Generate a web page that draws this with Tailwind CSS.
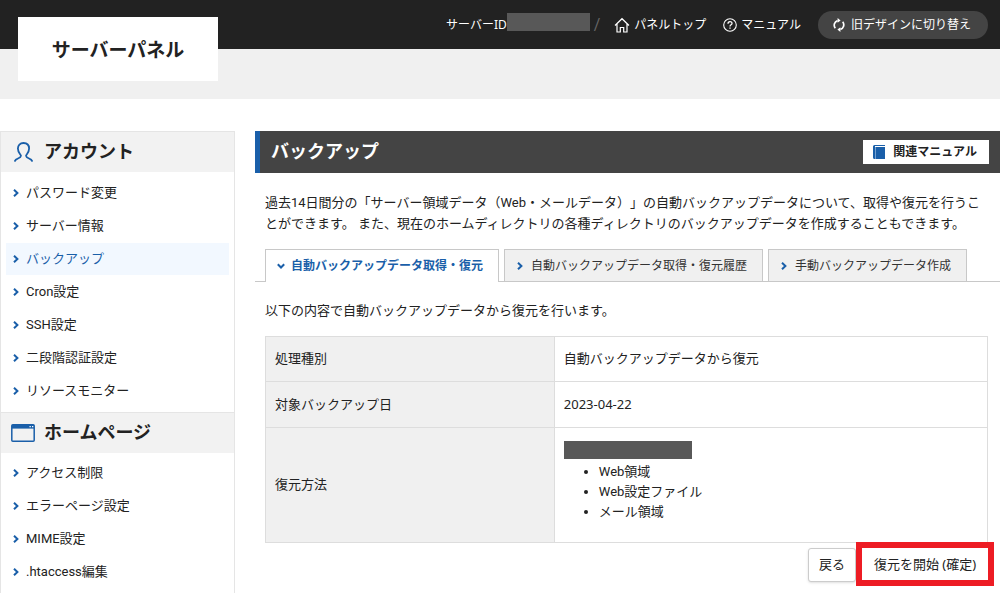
<!DOCTYPE html>
<html lang="ja">
<head>
<meta charset="utf-8">
<title>サーバーパネル</title>
<script src="https://cdn.jsdelivr.net/npm/@tailwindcss/browser@4"></script>
</head>
<body class="bg-white font-['Roboto','Noto_Sans_CJK_JP',sans-serif] text-[13px] text-[#222] [text-spacing-trim:space-all]">
<svg class="hidden" aria-hidden="true">
  <symbol id="chev" viewBox="0 0 6 8"><path d="M1 .8 4.4 4 1 7.2" fill="none" stroke="#1a5fa9" stroke-width="2"/></symbol>
</svg>

<header class="relative">
  <div class="flex h-[49px] items-center justify-end bg-[#222] pr-3 text-xs text-white">
    <span class="font-['Noto_Sans','Noto_Sans_CJK_JP',sans-serif]">サーバーID</span>
    <span class="mb-1.5 h-[18px] w-[83px] bg-[#585858]"></span>
    <span class="mr-3.5 ml-1 text-base text-[#666]">/</span>
    <a href="#" class="mr-[17px] flex items-center gap-1">
      <svg class="h-4 w-4" viewBox="0 0 16 16" fill="none" stroke="#fff" stroke-width="1.2"><path d="M1 8.5 8 1.7l7 6.8M3 7v8h3.3v-4.5h3.4V15H13V7"/></svg>
      パネルトップ</a>
    <a href="#" class="mr-[17px] flex items-center gap-1">
      <svg class="h-3.5 w-3.5" viewBox="0 0 14 14" fill="none" stroke="#fff" stroke-width="1.1"><circle cx="7" cy="7" r="6.3"/><path d="M5 5.7C5 3 9 3 9 5.4 9 6.8 7 6.8 7 8.4M7 9.6v1.2" stroke-width="1.3"/></svg>
      マニュアル</a>
    <button type="button" class="flex h-7 items-center gap-1.5 rounded-full bg-[#444] pr-[17px] pl-[15px]">
      <svg class="h-3.5 w-3" viewBox="0 0 12 14" fill="none" stroke="#fff" stroke-width="1.7"><path d="M2.3 10.2A4.8 4.8 0 0 1 4.600 2.600M9.7 3.8A4.8 4.8 0 0 1 7.400 11.400"/><path d="M4.600 0v4.8L7.600 2.4ZM7.400 9.2V14L4.400 11.6Z" fill="#fff" stroke="none"/></svg>
      旧デザインに切り替え</button>
  </div>
  <div class="h-[50px] bg-[#f0f0f0]"></div>
  <a href="#" class="absolute top-[17px] left-[18px] flex h-16 w-[200px] items-center justify-center bg-white pt-1 text-[19px] font-bold">サーバーパネル</a>
</header>

<div class="mt-8 flex items-start gap-5">
  <nav class="w-[235px] shrink-0 border-x border-[#e5e5e5]">
    <h2 class="flex h-[41px] items-center border-t border-[#e5e5e5] bg-[#f2f2f2] pl-2.5 text-lg font-bold">
      <span class="flex w-[33px] pl-[3px]"><svg class="h-5 w-[19px]" viewBox="0 0 19 20" fill="none" stroke="#1a5fa9" stroke-width="1.8"><path d="M.7 19.600C.9 16.300 6.800 16.800 7 13.800 7 12.500 3.900 11 3.900 6.600 3.900 3.200 6 1 9.500 1s5.600 2.200 5.600 5.600c0 4.400-3.100 5.900-3.100 7.200.2 3 6.100 2.500 6.300 5.800"/></svg></span>
      アカウント</h2>
    <ul class="flex flex-col gap-px p-[5px]">
      <li><a href="#" class="flex h-8 items-center gap-[7px] pl-[7px]"><svg class="h-2 w-1.5"><use href="#chev"/></svg>パスワード変更</a></li>
      <li><a href="#" class="flex h-8 items-center gap-[7px] pl-[7px]"><svg class="h-2 w-1.5"><use href="#chev"/></svg>サーバー情報</a></li>
      <li><a href="#" aria-current="page" class="flex h-8 items-center gap-[7px] bg-[#f2f8ff] pl-[7px] text-[#1a5fa9]"><svg class="h-2 w-1.5"><use href="#chev"/></svg>バックアップ</a></li>
      <li><a href="#" class="flex h-8 items-center gap-[7px] pl-[7px]"><svg class="h-2 w-1.5"><use href="#chev"/></svg>Cron設定</a></li>
      <li><a href="#" class="flex h-8 items-center gap-[7px] pl-[7px]"><svg class="h-2 w-1.5"><use href="#chev"/></svg>SSH設定</a></li>
      <li><a href="#" class="flex h-8 items-center gap-[7px] pl-[7px]"><svg class="h-2 w-1.5"><use href="#chev"/></svg>二段階認証設定</a></li>
      <li><a href="#" class="flex h-8 items-center gap-[7px] pl-[7px]"><svg class="h-2 w-1.5"><use href="#chev"/></svg>リソースモニター</a></li>
    </ul>
    <h2 class="flex h-[41px] items-center border-t border-[#e5e5e5] bg-[#f2f2f2] pl-2.5 text-lg font-bold">
      <span class="flex w-[33px]"><svg class="h-[18px] w-6" viewBox="0 0 24 18"><rect x=".8" y=".8" width="22.400" height="16.400" rx="1" fill="#f2f2f2" stroke="#1a5fa9" stroke-width="1.500"/><path d="M1 1h22v3.600H1Z" fill="#1a5fa9"/><path d="M18.500 2.700h1.300M21 2.700h1.300" stroke="#fff" stroke-width="1.200"/></svg></span>
      ホームページ</h2>
    <ul class="flex flex-col gap-px px-[5px] pt-1 pb-[5px]">
      <li><a href="#" class="flex h-8 items-center gap-[7px] pl-[7px]"><svg class="h-2 w-1.5"><use href="#chev"/></svg>アクセス制限</a></li>
      <li><a href="#" class="flex h-8 items-center gap-[7px] pl-[7px]"><svg class="h-2 w-1.5"><use href="#chev"/></svg>エラーページ設定</a></li>
      <li><a href="#" class="flex h-8 items-center gap-[7px] pl-[7px]"><svg class="h-2 w-1.5"><use href="#chev"/></svg>MIME設定</a></li>
      <li><a href="#" class="flex h-8 items-center gap-[7px] pl-[7px]"><svg class="h-2 w-1.5"><use href="#chev"/></svg>.htaccess編集</a></li>
    </ul>
  </nav>

  <main class="min-w-0 flex-1">
    <div class="flex h-[42px] items-center justify-between border-l-5 border-[#1a5fa9] bg-[#444] pr-[11px] pl-[11px]">
      <h1 class="text-lg font-bold text-white">バックアップ</h1>
      <a href="#" class="flex h-6 items-center gap-2 bg-white pr-3 pl-2.5 text-xs font-bold">
        <svg class="h-3.5 w-3" viewBox="0 0 12 14"><path d="M1.500 0H12v1H2v1h10v12H1.500A1.500 1.500 0 0 1 0 12.500v-11A1.500 1.500 0 0 1 1.500 0Z" fill="#1a5fa9"/><path d="M2.500 2v12" stroke="#8db3da" stroke-width=".8"/></svg>
        関連マニュアル</a>
    </div>
    <p class="mt-[19px] pr-[9px] pl-2.5 leading-[21px]">過去14日間分の「サーバー領域データ（Web・メールデータ）」の自動バックアップデータについて、取得や復元を行うことができます。 また、現在のホームディレクトリの各種ディレクトリのバックアップデータを作成することもできます。</p>

    <div class="mt-[15px] flex gap-[5px] border-b border-[#c8c8c8] pl-2.5 text-xs text-[#333]">
      <a href="#" aria-current="page" class="-mb-px flex h-[33px] items-center gap-1.5 border border-b-0 border-[#c8c8c8] bg-white pr-[15px] pl-[11px] font-bold text-[#1a5fa9]"><svg class="h-2 w-2" viewBox="0 0 8 8" fill="none" stroke="#1a5fa9" stroke-width="2"><path d="M.8 2.300 4 5.500l3.200-3.200"/></svg>自動バックアップデータ取得・復元</a>
      <a href="#" class="flex h-8 items-center gap-2 border border-b-0 border-[#c8c8c8] bg-[#f0f0f0] pr-[15px] pl-3"><svg class="h-2 w-1.5"><use href="#chev"/></svg>自動バックアップデータ取得・復元履歴</a>
      <a href="#" class="flex h-8 items-center gap-2 border border-b-0 border-[#c8c8c8] bg-[#f0f0f0] pr-[15px] pl-3"><svg class="h-2 w-1.5"><use href="#chev"/></svg>手動バックアップデータ作成</a>
    </div>

    <div class="pr-3 pl-2.5">
      <p class="mt-[18px] leading-[21px]">以下の内容で自動バックアップデータから復元を行います。</p>
      <table class="mt-[15px] w-full border-collapse text-left font-['Noto_Sans','Noto_Sans_CJK_JP',sans-serif]">
        <tbody>
          <tr class="h-[45px]"><th scope="row" class="w-2/5 border border-[#ddd] bg-[#f0f0f0] px-[9px] font-normal">処理種別</th><td class="border border-[#ddd] px-[9px]">自動バックアップデータから復元</td></tr>
          <tr class="h-[46px]"><th scope="row" class="border border-[#ddd] bg-[#f0f0f0] px-[9px] font-normal">対象バックアップ日</th><td class="border border-[#ddd] px-[9px]">2023-04-22</td></tr>
          <tr class="h-[115px]"><th scope="row" class="border border-[#ddd] bg-[#f0f0f0] px-[9px] font-normal">復元方法</th>
            <td class="border border-[#ddd] px-[9px] pt-[13px] pb-5 align-top font-['Roboto','Noto_Sans_CJK_JP',sans-serif]">
              <div class="mb-[3px] h-[18px] w-32 bg-[#585858]"></div>
              <ul class="list-disc pl-[35px] leading-5"><li>Web領域</li><li>Web設定ファイル</li><li>メール領域</li></ul>
            </td></tr>
        </tbody>
      </table>
      <div class="mt-[5px] flex justify-end gap-1.5 font-['Noto_Sans','Noto_Sans_CJK_JP',sans-serif]">
        <button type="button" class="h-[34px] rounded-[3px] border border-[#ccc] bg-white px-2.5 shadow-sm">戻る</button>
        <div class="relative flex">
          <button type="button" class="h-[34px] w-[126px] bg-white">復元を開始 (確定)</button>
          <span class="pointer-events-none absolute -inset-x-1.5 -top-1.5 h-11 border-6 border-[#ed1c24]"></span>
        </div>
      </div>
    </div>
  </main>
</div>
</body>
</html>
